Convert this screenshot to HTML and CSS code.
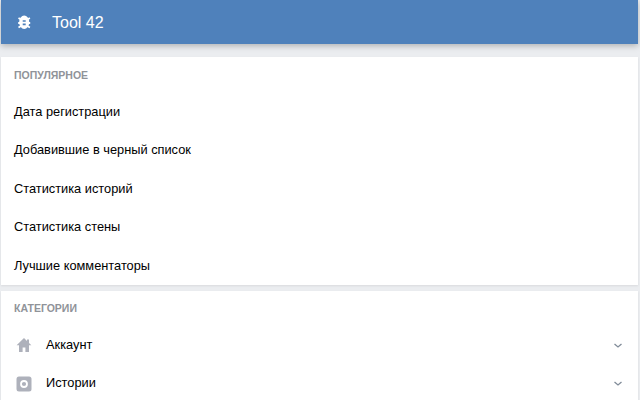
FILE: index.html
```html
<!DOCTYPE html>
<html lang="en">
<head>
    <meta charset="UTF-8">
    <title>Tool 42</title>
    <link rel="stylesheet" href="styles.css">
</head>
<body>
    <div class="app">
        <div class="header">
            <svg class="header-icon" viewBox="0 0 16 16" width="16" height="16">
                <ellipse cx="8.200" cy="8.200" rx="5" ry="6.800" fill="#fff"/>
                <path fill="none" stroke="#fff" stroke-width="1.800" d="M2.500 4l2.500 1.500M13.900 4l-2.500 1.500M2.200 9h3M14.200 9h-3M2.500 13.500l2.500-1.500M13.900 13.500l-2.500-1.500"/>
                <path fill="#4f81bb" d="M6.700 6.200h3v1.600h-3zM6.700 9.400h3v1.800h-3z"/>
            </svg>
            <span class="header-title">Tool 42</span>
        </div>

        <div class="card card-popular">
            <div class="card-title">ПОПУЛЯРНОЕ</div>
            <div class="row">Дата регистрации</div>
            <div class="row">Добавившие в черный список</div>
            <div class="row">Статистика историй</div>
            <div class="row">Статистика стены</div>
            <div class="row">Лучшие комментаторы</div>
        </div>

        <div class="card card-categories">
            <div class="card-title">КАТЕГОРИИ</div>
            <div class="row row-icon">
                <svg class="cat-icon" viewBox="0 0 16 16" width="16" height="16">
                    <path fill="#aeb1bb" d="M8 1L.6 8.200h2.400V15h3.600v-4.500h2.800V15H13V8.200h2.400L13 5.900V2.500h-2v1.500z"/>
                </svg>
                <span class="row-label">Аккаунт</span>
                <svg class="chevron" viewBox="0 0 8 5" width="8" height="5">
                    <path fill="none" stroke="#818c99" stroke-width="1.300" d="M.5 1L4 4l3.500-3"/>
                </svg>
            </div>
            <div class="row row-icon">
                <svg class="cat-icon" viewBox="0 0 16 16" width="16" height="16">
                    <rect x=".5" y=".5" width="15" height="15" rx="2.500" fill="#aeb1bb"/>
                    <circle cx="8" cy="8" r="3" fill="none" stroke="#fff" stroke-width="1.800"/>
                </svg>
                <span class="row-label">Истории</span>
                <svg class="chevron" viewBox="0 0 8 5" width="8" height="5">
                    <path fill="none" stroke="#818c99" stroke-width="1.300" d="M.5 1L4 4l3.500-3"/>
                </svg>
            </div>
        </div>
    </div>
</body>
</html>
```

FILE: styles.css
```css
html, body {
    height: 100%;
}

body {
    font-family: "Liberation Sans", Arial, sans-serif;
    background-color: #ebedf0;
    margin: 0;
    overflow: hidden;
}

.app {
    margin: 0 2px 0 1px;
}

.header {
    display: flex;
    align-items: center;
    height: 44px;
    padding-left: 15px;
    background-color: #4f81bb;
    box-shadow: 0 2px 6px rgba(0,0,0,0.25);
}

.header-title {
    margin-left: 20px;
    padding-top: 1px;
    font-size: 16px;
    color: #fff;
}

.card {
    background-color: #fff;
    box-shadow: 0 1px 2px rgba(0,0,0,0.08);
}

.card-popular {
    margin-top: 13px;
    margin-bottom: 6px;
}

.card-title {
    padding: 12px 13px 0;
    height: 24px;
    font-size: 10.500px;
    font-weight: bold;
    line-height: 13px;
    color: #909399;
}

.card-categories .card-title {
    padding-top: 11px;
}

.row {
    height: 38.400px;
    line-height: 38.400px;
    padding: 0 13px;
    font-size: 12.800px;
    color: #000;
}

.row-icon {
    display: flex;
    align-items: center;
}

.cat-icon {
    margin-left: 2px;
}

.row-label {
    flex: 1;
    margin-left: 14px;
}

.chevron {
    margin-right: 3px;
}
```
